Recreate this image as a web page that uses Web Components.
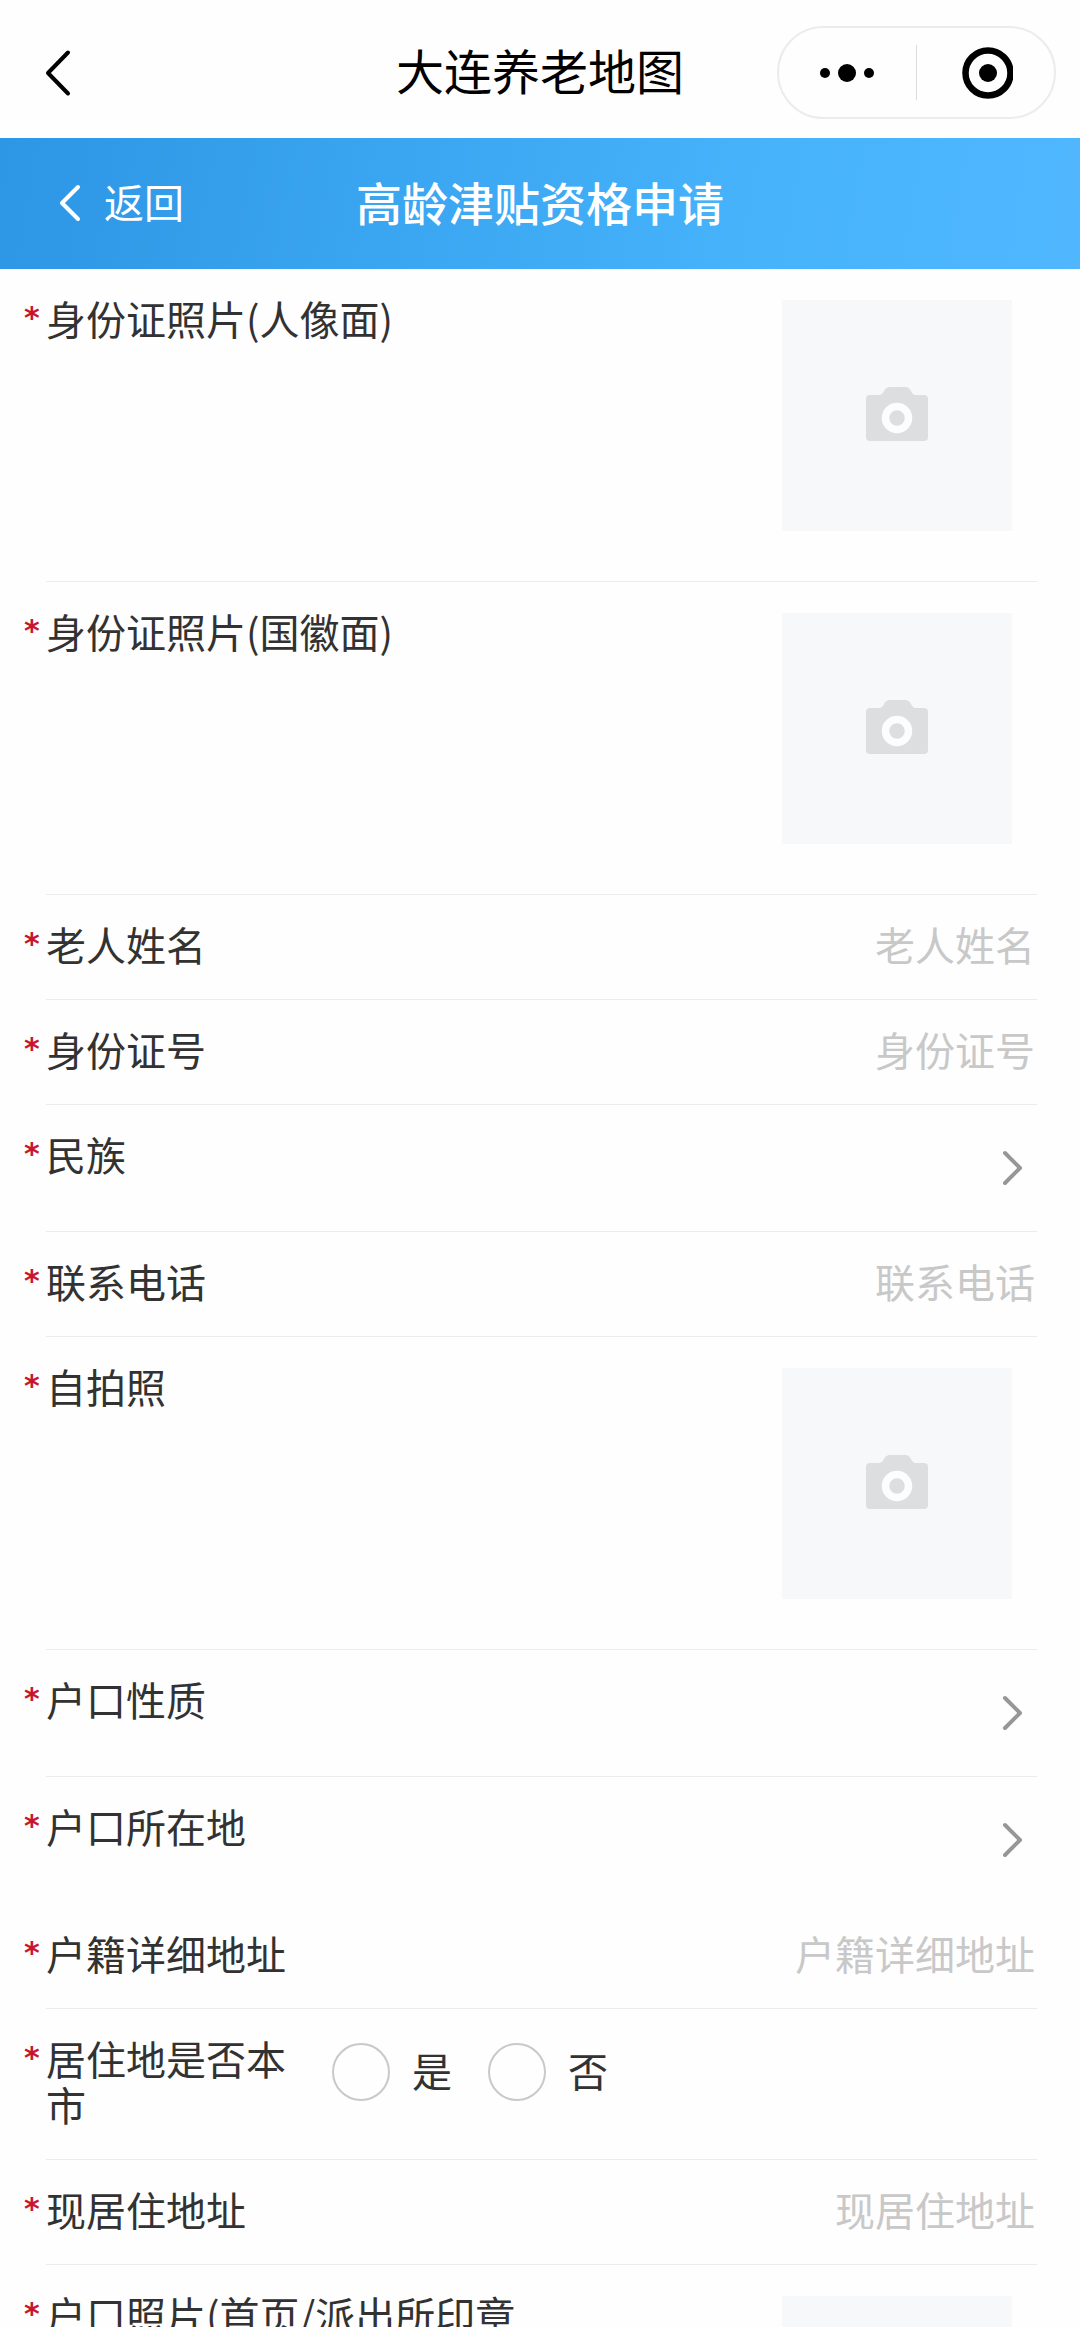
<!DOCTYPE html>
<html lang="zh-CN">
<head>
<meta charset="UTF-8">
<meta name="viewport" content="width=device-width, initial-scale=1.0">
<title>大连养老地图</title>
<style>
    body {
        margin: 0;
        height: 100vh;
        display: flex;
        flex-direction: column;
        background: #fefefe;
        color: #323233;
        font-family: 'Noto Sans CJK SC', sans-serif;
        font-size: 40px;
        line-height: 46px;
    }

    main {
        flex: 1;
        min-height: 0;
        overflow-y: auto;
        scrollbar-width: none;
    }
</style>
</head>
<body>
    <app-bar>大连养老地图</app-bar>
    <page-header back="返回">高龄津贴资格申请</page-header>

    <main>
        <photo-field>身份证照片(人像面)</photo-field>
        <photo-field>身份证照片(国徽面)</photo-field>
        <text-field placeholder="老人姓名">老人姓名</text-field>
        <text-field placeholder="身份证号">身份证号</text-field>
        <picker-field>民族</picker-field>
        <text-field placeholder="联系电话" type="tel">联系电话</text-field>
        <photo-field>自拍照</photo-field>
        <picker-field>户口性质</picker-field>
        <picker-field borderless>户口所在地</picker-field>
        <text-field placeholder="户籍详细地址">户籍详细地址</text-field>
        <radio-field options="是,否">居住地是否本市</radio-field>
        <text-field placeholder="现居住地址">现居住地址</text-field>
        <photo-field>户口照片(首页/派出所印章</photo-field>
    </main>

<script>
class AppBar extends HTMLElement {
    constructor() {
        super();
        this.attachShadow({ mode: 'open' });
    }

    connectedCallback() {
        this.shadowRoot.innerHTML = `
            <style>
                :host {
                    display: grid;
                    grid-template-columns: 1fr auto 1fr;
                    align-items: center;
                    flex: none;
                    height: 138px;
                    padding: 0 24px;
                    box-sizing: border-box;
                    color: #000;
                }

                button {
                    display: flex;
                    padding: 0;
                    border: 0;
                    background: none;
                    color: inherit;
                }

                svg { display: block; }

                h1 {
                    margin: 0;
                    font-size: 48px;
                    font-weight: 400;
                    line-height: 56px;
                }

                .back {
                    justify-self: start;
                    margin: 8px 0 0 20px;
                }

                .capsule {
                    justify-self: end;
                    display: flex;
                    align-items: center;
                    width: 279px;
                    height: 93px;
                    margin-top: 7px;
                    box-sizing: border-box;
                    border: 2px solid #ececec;
                    border-radius: 47px;
                }

                .capsule button {
                    flex: 1;
                    justify-content: center;
                }

                .divider {
                    width: 1px;
                    height: 55px;
                    background: #dcdcdc;
                }
            </style>

            <button class="back" aria-label="返回">
                <svg width="28" height="48" viewBox="0 0 28 48" fill="none" stroke="currentColor" stroke-width="4" stroke-linecap="round" stroke-linejoin="round">
                    <path d="M24 3.500L4 24L24 44.500"/>
                </svg>
            </button>
            <h1><slot></slot></h1>
            <div class="capsule">
                <button aria-label="更多">
                    <svg width="56" height="20" viewBox="0 0 56 20" fill="currentColor">
                        <circle cx="5" cy="10" r="5"/>
                        <circle cx="27" cy="10" r="9"/>
                        <circle cx="49" cy="10" r="5"/>
                    </svg>
                </button>
                <span class="divider"></span>
                <button aria-label="关闭">
                    <svg width="54" height="52" viewBox="0 0 54 52">
                        <circle cx="29" cy="26" r="22.500" fill="none" stroke="currentColor" stroke-width="6.500"/>
                        <circle cx="29" cy="26" r="9" fill="currentColor"/>
                    </svg>
                </button>
            </div>
        `;
    }
}

class PageHeader extends HTMLElement {
    constructor() {
        super();
        this.attachShadow({ mode: 'open' });
    }

    connectedCallback() {
        this.shadowRoot.innerHTML = `
            <style>
                :host {
                    display: grid;
                    grid-template-columns: 1fr auto 1fr;
                    align-items: center;
                    flex: none;
                    height: 131px;
                    padding: 0 57px 6px;
                    box-sizing: border-box;
                    background: linear-gradient(100deg, #2d96e5, #46b3fb 70%, #50b7ff);
                    color: #fff;
                }

                a {
                    display: flex;
                    align-items: center;
                    gap: 22px;
                    color: inherit;
                    text-decoration: none;
                }

                h2 {
                    margin: 0;
                    font-size: 46px;
                    font-weight: 500;
                    line-height: 56px;
                }
            </style>

            <a href="#">
                <svg width="25" height="42" viewBox="0 0 25 42" fill="none" stroke="currentColor" stroke-width="4" stroke-linecap="round" stroke-linejoin="round">
                    <path d="M21 7L5 23L21 39"/>
                </svg>
                ${this.getAttribute('back')}
            </a>
            <h2><slot></slot></h2>
        `;
    }
}

// Shared row: required mark, label, control
class FormField extends HTMLElement {
    constructor() {
        super();
        this.attachShadow({ mode: 'open' });
    }

    connectedCallback() {
        this.shadowRoot.innerHTML = `
            <style>
                :host {
                    display: block;
                    padding: 0 43px 0 24px;
                }

                .row {
                    display: grid;
                    grid-template-columns: 22px 1fr;
                }

                .mark {
                    padding-top: 26px;
                    color: #c8152d;
                    font-family: 'DejaVu Sans', sans-serif;
                    font-size: 30px;
                    font-weight: 700;
                }

                .body {
                    display: flex;
                    gap: 36px;
                    padding: 26px 0 32px;
                    border-bottom: 1px solid #ececee;
                }

                :host([borderless]) .body { border-color: transparent; }

                .label {
                    flex: none;
                    width: 250px;
                }

                .control {
                    flex: 1;
                    min-width: 0;
                }

                input, select {
                    font: inherit;
                    color: inherit;
                }

                ${this.styles()}
            </style>

            <div class="row">
                <span class="mark">*</span>
                <div class="body">${this.body()}</div>
            </div>
        `;
    }

    styles() {
        return '';
    }

    body() {
        return `
            <label class="label" for="control"><slot></slot></label>
            ${this.control()}
        `;
    }
}

class TextField extends FormField {
    styles() {
        return `
            input {
                height: 46px;
                padding: 0 2px 0 0;
                border: 0;
                outline: 0;
                background: none;
                text-align: right;
            }

            input::placeholder { color: #c8c8c8; }
        `;
    }

    control() {
        const type = this.getAttribute('type') || 'text';
        return `<input class="control" id="control" type="${type}" placeholder="${this.getAttribute('placeholder')}">`;
    }
}

class PickerField extends FormField {
    styles() {
        return `
            .body { padding-bottom: 26px; }

            .control {
                display: grid;
                align-items: center;
                height: 74px;
            }

            select, svg { grid-area: 1 / 1; }

            select {
                appearance: none;
                width: 100%;
                height: 74px;
                padding: 0 48px 0 0;
                border: 0;
                background: none;
                text-align: right;
            }

            svg {
                justify-self: end;
                margin-right: 12px;
                pointer-events: none;
            }
        `;
    }

    control() {
        return `
            <div class="control">
                <select id="control"><option value=""></option></select>
                <svg width="25" height="38" viewBox="0 0 25 38" fill="none" stroke="#969799" stroke-width="4" stroke-linecap="round" stroke-linejoin="round">
                    <path d="M5 4L20 19L5 34"/>
                </svg>
            </div>
        `;
    }
}

class RadioField extends FormField {
    styles() {
        return `
            .control {
                display: flex;
                align-items: center;
                gap: 36px;
                height: 74px;
            }

            .option {
                display: flex;
                align-items: center;
                gap: 22px;
            }

            .option span { padding-bottom: 4px; }

            input {
                appearance: none;
                width: 58px;
                height: 58px;
                margin: 0;
                border: 2px solid #c8c9cc;
                border-radius: 50%;
            }

            input:checked { border: 16px solid #2d96e5; }
        `;
    }

    body() {
        const options = this.getAttribute('options').split(',');
        return `
            <span class="label" id="label"><slot></slot></span>
            <div class="control" role="radiogroup" aria-labelledby="label">
                ${options.map(option => `
                    <label class="option"><input type="radio" name="choice" value="${option}"><span>${option}</span></label>
                `).join('')}
            </div>
        `;
    }
}

class PhotoField extends FormField {
    styles() {
        return `
            .body {
                justify-content: space-between;
                padding: 26px 25px 50px 0;
            }

            .label { width: 480px; }

            .upload {
                display: grid;
                place-items: center;
                width: 230px;
                height: 231px;
                margin-top: 5px;
                background: #f7f8fa;
            }

            .upload input, .upload svg { grid-area: 1 / 1; }

            .upload input {
                width: 100%;
                height: 100%;
                opacity: 0;
            }

            svg { pointer-events: none; }
        `;
    }

    control() {
        return `
            <div class="upload">
                <input id="control" type="file" accept="image/*">
                <svg width="62" height="58" viewBox="0 0 62 58">
                    <path fill="#dcdee0" d="M4 8H13Q16 8 18 4Q20 0 24 0H39Q43 0 45 4Q47 8 49 8H58Q62 8 62 12V50Q62 54 58 54H4Q0 54 0 50V12Q0 8 4 8Z"/>
                    <circle cx="31" cy="31" r="11.500" fill="none" stroke="#fcfdfe" stroke-width="7.500"/>
                </svg>
            </div>
        `;
    }
}

customElements.define('app-bar', AppBar);
customElements.define('page-header', PageHeader);
customElements.define('text-field', TextField);
customElements.define('picker-field', PickerField);
customElements.define('radio-field', RadioField);
customElements.define('photo-field', PhotoField);
</script>
</body>
</html>
